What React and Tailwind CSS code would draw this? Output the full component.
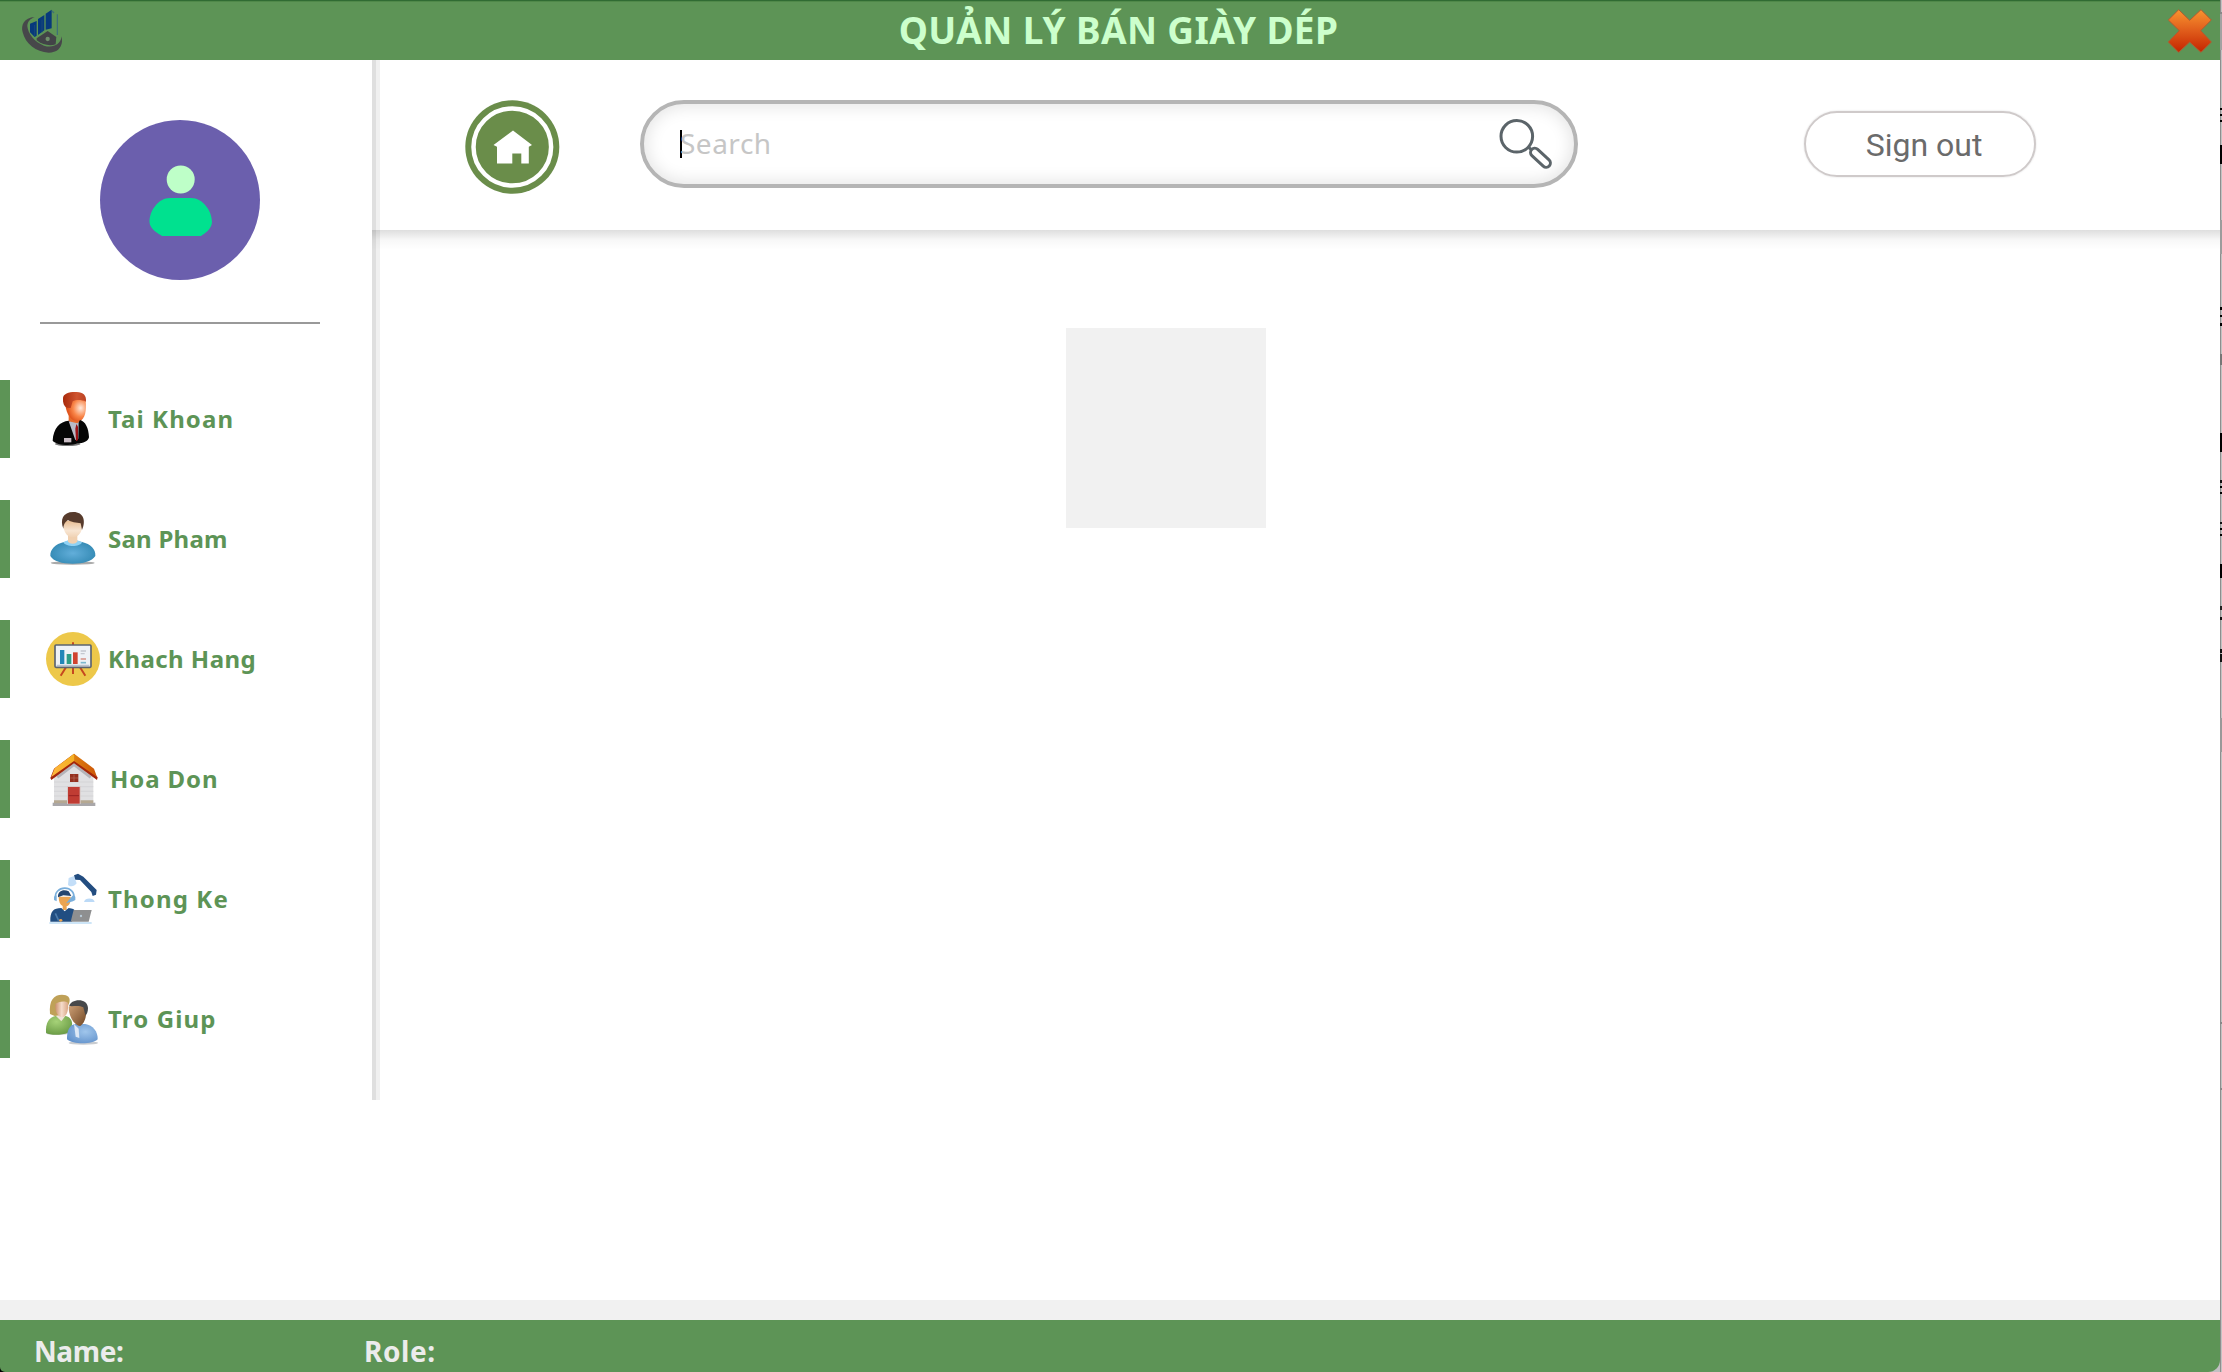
function LogoIcon() {
  return (
    <svg className="h-11 w-11" viewBox="60 24 132 132">
      <path d="M104 48 C72 50 62 72 68 94 C76 128 108 154 146 155 C170 154 184 142 186 122 L186 106 C180 132 158 142 132 134 C104 124 84 98 82 76 C82 62 90 54 104 48Z" fill="#47474a" />
      <path d="M110 112 L143 90 L169 108 L167 130 C150 136 128 132 110 118Z" fill="#424347" />
      <circle cx="143" cy="114" r="6.500" fill="#6f8f6b" />
      <path d="M90 68 L110 60 V104 L104 108 L90 94Z M114 54 L133 42 V88 L114 102Z M137 38 L155 26 V82 L137 86Z" fill="#07397c" />
      <path d="M104 72 V106 M126 56 V94" stroke="#1c4b7a" strokeWidth="2.500" />
      <path d="M156 30 L162 36 M172 40 V102" stroke="#3d6f78" strokeWidth="3.500" fill="none" />
    </svg>
  );
}

function CloseIcon() {
  return (
    <svg className="h-[46px] w-[46px]" viewBox="315 24 138 138">
      <defs>
        <linearGradient id="close" x1="0" y1="0" x2="0" y2="1">
          <stop offset="0" stopColor="#f9942f" />
          <stop offset=".45" stopColor="#e2611d" />
          <stop offset="1" stopColor="#c42400" />
        </linearGradient>
      </defs>
      <path d="M350 29 L383 61 L417 29 L448 60 L416 92 L448 126 L417 157 L383 126 L350 157 L319 126 L352 92 L319 60Z" fill="url(#close)" stroke="#b35a30" strokeWidth="3" strokeLinejoin="round" />
    </svg>
  );
}

function Avatar() {
  return (
    <svg className="h-40 w-40" viewBox="0 0 160 160">
      <circle cx="80" cy="80" r="80" fill="#6b5fad" />
      <circle cx="80.700" cy="59.500" r="14" fill="#beffc8" />
      <path d="M70 78 H91 C103 78 112 91 112 102 C112 109 104 114 101 116 H62 C59 114 49.500 109 49.500 102 C49.500 91 58 78 70 78Z" fill="#00e18f" />
    </svg>
  );
}

function HomeIcon() {
  return (
    <svg className="h-24 w-24" viewBox="0 0 96 96">
      <ellipse cx="48.300" cy="47" rx="47" ry="46.800" fill="#6a8d4a" />
      <ellipse cx="48.300" cy="47" rx="38.800" ry="38.500" fill="none" stroke="#fff" strokeWidth="4.500" />
      <path d="M49 30.500 L68 45 L64.800 46.800 V63.500 H57.300 V53.500 H48.300 V63.500 H33 V46.800 L29.500 45Z" fill="#fff" />
    </svg>
  );
}

function SearchIcon() {
  return (
    <svg className="h-14 w-14" viewBox="0 -1.500 56 56" fill="none" stroke="#5b6469">
      <circle cx="18.800" cy="18.800" r="15.800" strokeWidth="3" />
      <path d="M30 29.500 L34 32.500" strokeWidth="3" />
      <rect x="30.500" y="36" width="24" height="8.500" rx="4.250" transform="rotate(43 42.500 40.200)" strokeWidth="3" />
    </svg>
  );
}

function ManIcon() {
  return (
    <svg className="h-14 w-14" viewBox="135 93 168 168">
      <defs>
        <radialGradient id="manFace" cx=".75" cy=".45" r=".6">
          <stop offset="0" stopColor="#ffe9dc" />
          <stop offset=".6" stopColor="#f98548" />
          <stop offset="1" stopColor="#e0561f" />
        </radialGradient>
        <linearGradient id="manHair" x1="0" y1="0" x2="1" y2="0">
          <stop offset="0" stopColor="#a8290a" />
          <stop offset=".6" stopColor="#cf5430" />
          <stop offset="1" stopColor="#bb4222" />
        </linearGradient>
      </defs>
      <ellipse cx="203" cy="252" rx="38" ry="6" fill="#777" />
      <path d="M206 160 H240 V190 L228 206 L206 188Z" fill="#e56a2c" />
      <path d="M194 120 C210 108 245 108 257 124 C260 150 256 178 238 184 C218 186 204 170 198 146Z" fill="url(#manFace)" />
      <path d="M189 116 C188 100 210 95 230 96 C250 97 260 106 258 125 C244 119 228 119 218 124 L212 144 L200 143 C192 138 188 128 189 116Z" fill="url(#manHair)" />
      <path d="M206 182 C180 184 160 204 158 242 C168 256 216 258 232 250 C250 250 264 244 267 232 C266 204 256 184 240 180 L228 200Z" fill="#060606" />
      <path d="M206 184 L232 190 L236 186 L235 236 L226 240Z" fill="#b9bcc8" />
      <path d="M229 192 L234 200 L234 240 L228 244 L226 206Z" fill="#9c1216" />
      <rect x="192" y="234" width="22" height="13" fill="#c9bcc4" />
    </svg>
  );
}

function UserIcon() {
  return (
    <svg className="h-14 w-14" viewBox="135 453 168 168">
      <defs>
        <radialGradient id="userBody" cx=".5" cy=".55" r=".6">
          <stop offset="0" stopColor="#62aeda" />
          <stop offset="1" stopColor="#2f86b0" />
        </radialGradient>
        <linearGradient id="userFace" x1="0" y1="0" x2="0" y2="1">
          <stop offset="0" stopColor="#e9bd92" />
          <stop offset=".6" stopColor="#f8e5d2" />
          <stop offset="1" stopColor="#f0d2b4" />
        </linearGradient>
      </defs>
      <ellipse cx="218" cy="609" rx="66" ry="5" fill="#aaa" />
      <path d="M192 546 C210 540 228 540 246 546 C272 552 288 568 286 588 C276 604 250 611 218 611 C186 611 160 604 151 588 C150 568 166 552 192 546Z" fill="url(#userBody)" />
      <path d="M190 547 L204 541 L232 541 L246 547 C240 562 198 562 190 547Z" fill="#8ed2f5" />
      <path d="M204 520 H232 V544 C228 554 208 554 204 544Z" fill="#f0d0b0" />
      <path d="M191 482 H246 V504 C244 522 230 532 218 532 C206 532 194 522 191 504Z" fill="url(#userFace)" />
      <path d="M190 506 C180 480 188 456 220 456 C252 456 258 484 246 510 L242 490 C230 488 212 486 204 480 C196 486 192 490 190 506Z" fill="#573b2c" />
    </svg>
  );
}

function BoardIcon() {
  return (
    <svg className="h-14 w-14" viewBox="135 813 168 168">
      <circle cx="219" cy="897" r="81" fill="#edc84a" />
      <path d="M219 847 V856 M219 922 V942 M198 922 L182 947 M240 922 L256 947" stroke="#c6481f" strokeWidth="6" />
      <rect x="165" y="855" width="108" height="67" rx="3" fill="#eef2f6" stroke="#5b6470" strokeWidth="5" />
      <path d="M170 916 H268" stroke="#b9c2cd" strokeWidth="4" />
      <rect x="180" y="870" width="13" height="42" fill="#2286b8" />
      <rect x="200" y="882" width="14" height="30" fill="#2f9c86" />
      <rect x="219" y="877" width="14" height="35" fill="#d0432f" />
      <path d="M242 873 H258 M242 881 H254" stroke="#c3c8cf" strokeWidth="4" />
      <path d="M242 897 H258" stroke="#d99a90" strokeWidth="5" />
      <path d="M242 908 H258" stroke="#7cb8cf" strokeWidth="5" />
    </svg>
  );
}

function HouseIcon() {
  return (
    <svg className="h-14 w-14" viewBox="135 153 168 168">
      <defs>
        <linearGradient id="roof" x1="0" y1="0" x2="1" y2="0">
          <stop offset="0" stopColor="#ffb63c" />
          <stop offset=".49" stopColor="#f3b024" />
          <stop offset=".51" stopColor="#dd7d10" />
          <stop offset="1" stopColor="#cc5607" />
        </linearGradient>
      </defs>
      <rect x="158" y="308" width="128" height="10" fill="#a9a7aa" />
      <path d="M162 230 L222 184 L280 230 V308 H162Z" fill="#e0e0e2" />
      <path d="M162 246 H280 M162 260 H280 M162 274 H280 M162 288 H280" stroke="#cfcfd2" strokeWidth="2" />
      <path d="M162 301 H280 V310 H162Z" fill="#b5a892" />
      <path d="M172 232 L222 194 L272 232" fill="none" stroke="#b4b4b9" strokeWidth="8" />
      <path d="M222 161 L293 232 L291 240 L222 190 L154 240 L151 234 L162 206Z" fill="#a3260c" />
      <path d="M222 161 L282 206 L291 231 L222 183 L154 231 L164 205Z" fill="url(#roof)" />
      <rect x="210" y="222" width="25" height="24" fill="#94301f" />
      <path d="M222 224 V245 M211 234 H234" stroke="#b96a5c" strokeWidth="2" />
      <rect x="201" y="258" width="41" height="54" fill="#d8c9c7" />
      <rect x="204" y="261" width="35" height="50" fill="#c03c33" />
      <path d="M206 287 H237" stroke="#922" strokeWidth="3" />
    </svg>
  );
}

function SupportIcon() {
  return (
    <svg className="h-14 w-14" viewBox="135 513 168 168">
      <path d="M148 669 H275" stroke="#bcdcf5" strokeWidth="5" />
      <path d="M206 534 L222 528 L230 550 C222 562 208 560 204 554Z" fill="#c3def8" />
      <path d="M222 526 L234 521 L250 530 L290 570 L288 584 L278 588 L274 576 L240 540 L226 539Z" fill="#234d80" />
      <path d="M252 606 C254 592 282 592 284 606Z" fill="#bcdaf7" />
      <path d="M176 590 H212 C214 608 206 618 200 618 V630 H188 V618 C180 614 176 604 176 590Z" fill="#eba451" />
      <path d="M174 592 C172 572 192 566 206 574 L214 588 L190 586Z" fill="#25466f" />
      <path d="M166 598 C160 554 228 552 222 598" fill="none" stroke="#79aedb" strokeWidth="5" />
      <path d="M162 590 L170 586 V604 L162 600Z M219 586 L226 590 V600 L219 604 L198 610" fill="#79aedb" />
      <path d="M151 665 C150 634 160 624 184 624 L194 634 L206 624 C218 625 224 628 225 634 L216 665Z" fill="#214e82" />
      <path d="M166 640 L176 662" stroke="#4c7bab" strokeWidth="5" />
      <path d="M221 630 H275 L266 665 H212Z" fill="#8e8f90" />
      <circle cx="243" cy="648" r="3.500" fill="#b9cbd9" />
      <ellipse cx="182" cy="661" rx="5" ry="4" fill="#eba451" />
    </svg>
  );
}

function PeopleIcon() {
  return (
    <svg className="h-14 w-14" viewBox="135 873 168 168">
      <defs>
        <radialGradient id="peopleGreen" cx=".4" cy=".3" r=".8">
          <stop offset="0" stopColor="#a6d278" />
          <stop offset="1" stopColor="#649640" />
        </radialGradient>
        <radialGradient id="peopleBlue" cx=".6" cy=".4" r=".7">
          <stop offset="0" stopColor="#a0c6ec" />
          <stop offset="1" stopColor="#6090ca" />
        </radialGradient>
        <linearGradient id="peopleFace" x1="0" y1="0" x2="1" y2="0">
          <stop offset="0" stopColor="#c98f6c" />
          <stop offset=".5" stopColor="#f5dccb" />
          <stop offset="1" stopColor="#d9a684" />
        </linearGradient>
        <linearGradient id="peopleDark" x1="0" y1="0" x2="1" y2="1">
          <stop offset="0" stopColor="#d0a277" />
          <stop offset="1" stopColor="#6e4523" />
        </linearGradient>
      </defs>
      <ellipse cx="250" cy="1029" rx="44" ry="5" fill="#c9ccd0" />
      <ellipse cx="172" cy="1000" rx="34" ry="5" fill="#c9ccd0" />
      <path d="M138 998 C136 968 148 952 166 948 H196 C210 950 218 962 216 976 L204 998 C184 1006 150 1006 138 998Z" fill="url(#peopleGreen)" />
      <path d="M168 948 L184 964 L196 948Z" fill="#eee3d8" />
      <path d="M150 942 C146 900 162 884 186 884 C204 884 212 892 208 908 L192 944 L164 948Z" fill="#bfa158" />
      <path d="M166 912 C174 904 196 902 204 908 C206 934 200 950 186 952 C172 950 164 932 166 912Z" fill="url(#peopleFace)" />
      <path d="M201 1018 C200 990 210 974 226 972 H256 C278 976 294 994 293 1018 C278 1034 218 1034 201 1018Z" fill="url(#peopleBlue)" />
      <path d="M222 972 L236 986 L238 1014 L227 1010Z" fill="#dde8f5" />
      <path d="M206 920 C216 910 250 912 258 922 C262 950 252 972 240 978 C222 976 206 948 206 920Z" fill="url(#peopleDark)" />
      <path d="M208 918 C210 898 262 890 264 924 C264 936 260 944 256 946 L250 922 C236 914 222 920 208 918Z" fill="#47484a" />
    </svg>
  );
}

const items = [
  { label: "Tai Khoan", Icon: ManIcon, text: "ml-[7px] tracking-[1.1px]" },
  { label: "San Pham", Icon: UserIcon, text: "ml-[7px] tracking-[0.25px]" },
  { label: "Khach Hang", Icon: BoardIcon, text: "ml-[7px] tracking-[0.45px]" },
  { label: "Hoa Don", Icon: HouseIcon, text: "ml-[9px] tracking-[0.9px]" },
  { label: "Thong Ke", Icon: SupportIcon, text: "ml-[7px] tracking-[1.15px]" },
  { label: "Tro Giup", Icon: PeopleIcon, text: "ml-[7px] tracking-[1.15px]" },
];

const edgeMarks = [
  [12, 2, "#888"], [14, 36, "#a2a2a2"], [108, 2, "#000"], [114, 2, "#000"], [120, 2, "#000"],
  [145, 19, "#000"], [220, 34, "#9c9c9c"], [307, 3, "#000"], [315, 2, "#000"], [323, 3, "#000"],
  [354, 11, "#777"], [433, 19, "#000"], [480, 3, "#111"], [486, 2, "#000"], [492, 2, "#000"],
  [522, 2, "#111"], [528, 2, "#000"], [534, 2, "#000"], [564, 14, "#000"], [606, 4, "#222"],
  [617, 3, "#111"], [649, 4, "#111"], [654, 8, "#111"], [718, 34, "#999"], [1022, 2, "#888"],
  [1088, 2, "#888"],
];

function WindowEdge() {
  return (
    <svg className="h-full w-[2px] shrink-0" viewBox="0 0 2 1372" preserveAspectRatio="none" shapeRendering="crispEdges">
      <rect width="1" height="1372" fill="#8e8e8e" />
      <rect x="1" width="1" height="1372" fill="#c2c2c2" />
      {edgeMarks.map(([y, h, fill]) => (
        <rect key={y} y={y} width="2" height={h} fill={fill} />
      ))}
    </svg>
  );
}

export default function App() {
  return (
    <div className="flex h-[1372px] w-[2222px] overflow-hidden bg-[#c2c2c2] font-['Noto_Sans',sans-serif]">
      <div className="flex min-w-0 flex-1 flex-col">
        <header className="flex h-[60px] shrink-0 items-center justify-between border-t border-[#306b33] bg-[#5d9456] pr-[7px] pl-5 shadow-[inset_0_1px_0_#4f8849]">
          <LogoIcon />
          <h1 className="-mt-[2px] ml-[6px] text-[37px] leading-none font-bold tracking-[0.35px] whitespace-nowrap text-[#ccffcc]">QUẢN LÝ BÁN GIÀY DÉP</h1>
          <button aria-label="Close">
            <CloseIcon />
          </button>
        </header>

        <div className="flex h-[1240px] shrink-0 bg-white">
          <aside className="flex h-[1040px] w-[380px] shrink-0">
            <div className="flex w-[372px] flex-col">
              <div className="flex flex-col items-center pt-[60px] pr-3">
                <Avatar />
              </div>
              <div className="mt-[42px] ml-10 h-[2px] w-[280px] bg-[#999]" />
              <nav className="mt-14 flex flex-col gap-[42px]">
                {items.map(({ label, Icon, text }) => (
                  <a key={label} className="flex h-[78px] items-center border-l-[10px] border-[#5d9456] pl-[35px]">
                    <Icon />
                    <span className={`text-2xl font-bold whitespace-nowrap text-[#5d9456] ${text}`}>{label}</span>
                  </a>
                ))}
              </nav>
            </div>
            <div className="w-1 bg-[#dfdfdf]" />
            <div className="w-1 bg-[#f0f0f0]" />
          </aside>

          <div className="flex flex-1 flex-col">
            <div className="flex h-[170px] items-start">
              <button className="mt-10 ml-[84px]" aria-label="Home">
                <HomeIcon />
              </button>
              <div className="mt-10 ml-20 flex h-[88px] w-[938px] items-center rounded-full border-4 border-[#b5b5b5] pl-9 shadow-[inset_0_0_16px_3px_rgba(0,0,0,0.1)]">
                <span className="h-7 w-[2px] bg-black" />
                <span className="-mt-[2px] -ml-[2px] flex-1 text-[28px] tracking-[0.5px] text-[#c6c6c6]">Search</span>
                <span className="mr-5">
                  <SearchIcon />
                </span>
              </div>
              <button className="mt-[51px] ml-[226px] flex h-[66px] w-[232px] items-center justify-center rounded-full border-2 border-[#cfcaca] pt-[2px] pl-2 font-[Roboto,sans-serif] text-[32px] text-[#6b6b6b] shadow-[0_0_2px_rgba(0,0,0,0.15)]">
                Sign out
              </button>
            </div>
            <div className="-ml-2 h-5 bg-linear-to-b from-black/13 via-black/3 to-transparent" />
            <div className="mt-[78px] ml-[686px] h-[200px] w-[200px] bg-[#f1f1f1]" />
          </div>
        </div>

        <div className="h-5 shrink-0 bg-[#f1f1f1]" />
        <div className="h-[52px] shrink-0 bg-[linear-gradient(to_right,#000_50%,#c2bfc3_50%)]">
          <footer className="flex h-full rounded-br-[12px] rounded-bl-[5px] bg-[#5d9456] pt-[12px] pl-[34px] text-[28px] leading-[38px] font-bold text-[#ececec]">
            <span className="w-[330px] tracking-[-0.4px]">Name:</span>
            <span className="tracking-[0.6px]">Role:</span>
          </footer>
        </div>
      </div>
      <WindowEdge />
    </div>
  );
}
